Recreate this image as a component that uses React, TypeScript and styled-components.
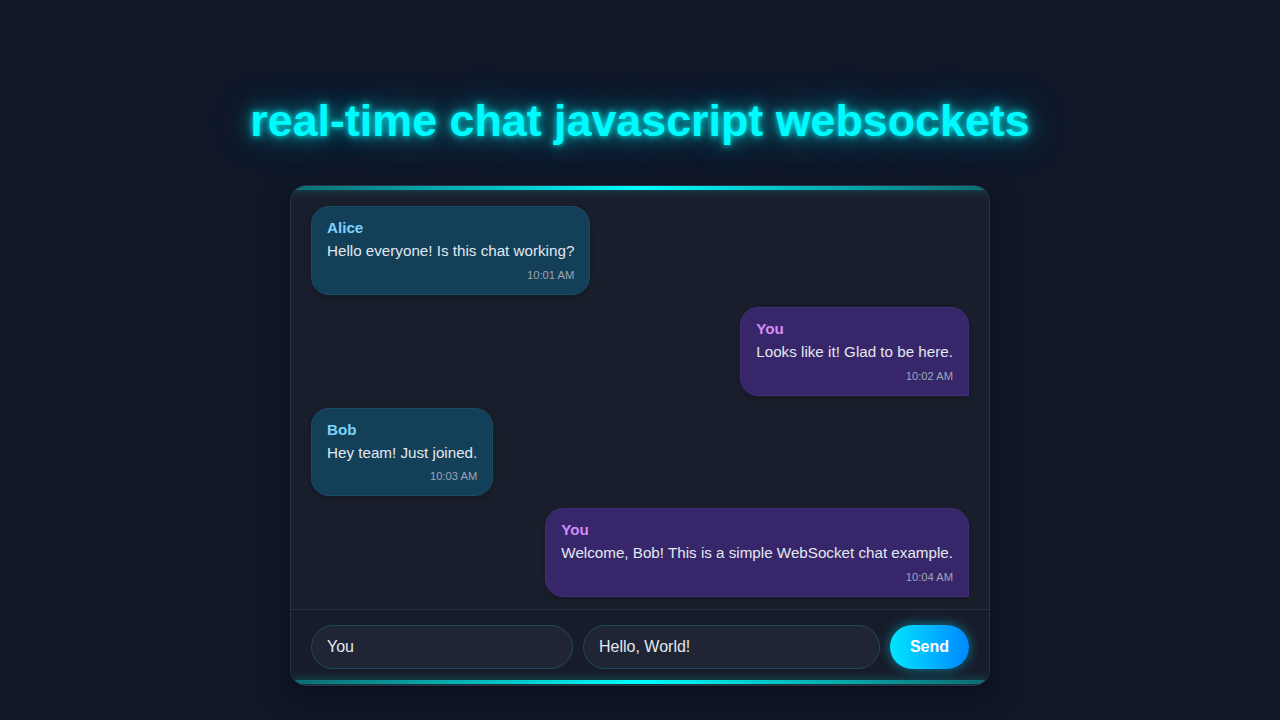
import React from 'react'
import styled, { createGlobalStyle } from 'styled-components'

const GlobalStyle = createGlobalStyle`
  html, body {
    margin: 0;
    padding: 0;
    background: #0f1729;
    font-family: 'Liberation Sans', Arial, sans-serif;
  }
`

const Page = styled.div`
  min-height: 720px;
  display: flex;
  flex-direction: column;
  align-items: center;
  padding-top: 91px;
  box-sizing: border-box;
`

const Title = styled.h1`
  margin: 0 0 36px;
  font-family: 'Liberation Sans', Arial, sans-serif;
  font-weight: 700;
  font-size: 44.8px;
  line-height: 58px;
  color: #00fbff;
  text-shadow: 0 0 6px rgba(0, 255, 255, 0.9), 0 0 18px rgba(0, 255, 255, 0.6),
    0 0 40px rgba(0, 220, 255, 0.45);
`

const ChatBox = styled.div`
  position: relative;
  width: 700px;
  box-sizing: border-box;
  background: #1a1f2d;
  border: 1px solid #2b3344;
  border-radius: 16px;
  overflow: hidden;
  box-shadow: 0 10px 30px rgba(0, 0, 0, 0.4);
`

const GlowBar = styled.div<{ $side: 'top' | 'bottom' }>`
  position: absolute;
  left: 0;
  right: 0;
  height: 4px;
  ${(p) => (p.$side === 'top' ? 'top: 0;' : 'bottom: 1px;')}
  background: linear-gradient(90deg, #0e6a70, #00ffff 50%, #0e6a70);
  box-shadow: 0 0 8px rgba(0, 255, 255, 0.35);
`

const Messages = styled.div`
  height: 423px;
  box-sizing: border-box;
  padding: 20px 20px 0;
  display: flex;
  flex-direction: column;
  gap: 12px;
  overflow: hidden;
`

const Bubble = styled.div<{ $mine: boolean }>`
  align-self: ${(p) => (p.$mine ? 'flex-end' : 'flex-start')};
  padding: 12px 15px;
  border-radius: 18px;
  ${(p) => (p.$mine ? 'border-bottom-right-radius: 0;' : '')}
  background: ${(p) => (p.$mine ? '#38266a' : '#133f59')};
  border: 1px solid ${(p) => (p.$mine ? '#412e74' : '#1b4c66')};
  box-shadow: 0 2px 8px rgba(0, 0, 0, 0.25);
  color: #e2e8f0;
`

const Sender = styled.div<{ $mine: boolean }>`
  font-size: 15.2px;
  line-height: 17px;
  font-weight: 700;
  margin-bottom: 4px;
  color: ${(p) => (p.$mine ? '#d28cf7' : '#7dd3fc')};
`

const Text = styled.div`
  font-size: 15.2px;
  line-height: 1.5;
  color: #e2e8f0;
`

const Time = styled.div`
  margin-top: 5px;
  font-size: 11.2px;
  line-height: 14px;
  text-align: right;
  color: #9aa6b8;
`

const InputBar = styled.div`
  display: flex;
  gap: 10px;
  padding: 15px 20px 16px;
  border-top: 1px solid #2a3142;
  background: #171c2a;
`

const Field = styled.input<{ $width?: number }>`
  ${(p) => (p.$width ? `flex: 0 0 ${p.$width}px;` : 'flex: 1;')}
  min-width: 0;
  height: 44px;
  box-sizing: border-box;
  padding: 0 15px;
  border-radius: 22px;
  border: 1px solid #1d4a5e;
  background: #1f2535;
  color: #e2e8f0;
  font-family: 'Liberation Sans', Arial, sans-serif;
  font-size: 16px;
  outline: none;
`

const SendButton = styled.button`
  height: 44px;
  padding: 0 20px;
  border: none;
  border-radius: 22px;
  background: linear-gradient(90deg, #00e5ff, #0088ff);
  color: #ffffff;
  font-family: 'Liberation Sans', Arial, sans-serif;
  font-weight: 700;
  font-size: 16px;
  box-shadow: 0 0 12px rgba(0, 229, 255, 0.5);
  cursor: pointer;
`

const messages = [
  { from: 'Alice', text: 'Hello everyone! Is this chat working?', time: '10:01 AM' },
  { from: 'You', text: 'Looks like it! Glad to be here.', time: '10:02 AM' },
  { from: 'Bob', text: 'Hey team! Just joined.', time: '10:03 AM' },
  { from: 'You', text: 'Welcome, Bob! This is a simple WebSocket chat example.', time: '10:04 AM' },
]

export default function App() {
  return (
    <>
      <GlobalStyle />
      <Page>
        <Title>real-time chat javascript websockets</Title>
        <ChatBox>
          <GlowBar $side="top" />
          <Messages>
            {messages.map((m, i) => {
              const mine = m.from === 'You'
              return (
                <Bubble key={i} $mine={mine}>
                  <Sender $mine={mine}>{m.from}</Sender>
                  <Text>{m.text}</Text>
                  <Time>{m.time}</Time>
                </Bubble>
              )
            })}
          </Messages>
          <InputBar>
            <Field $width={262} defaultValue="You" />
            <Field defaultValue="Hello, World!" />
            <SendButton>Send</SendButton>
          </InputBar>
          <GlowBar $side="bottom" />
        </ChatBox>
      </Page>
    </>
  )
}
